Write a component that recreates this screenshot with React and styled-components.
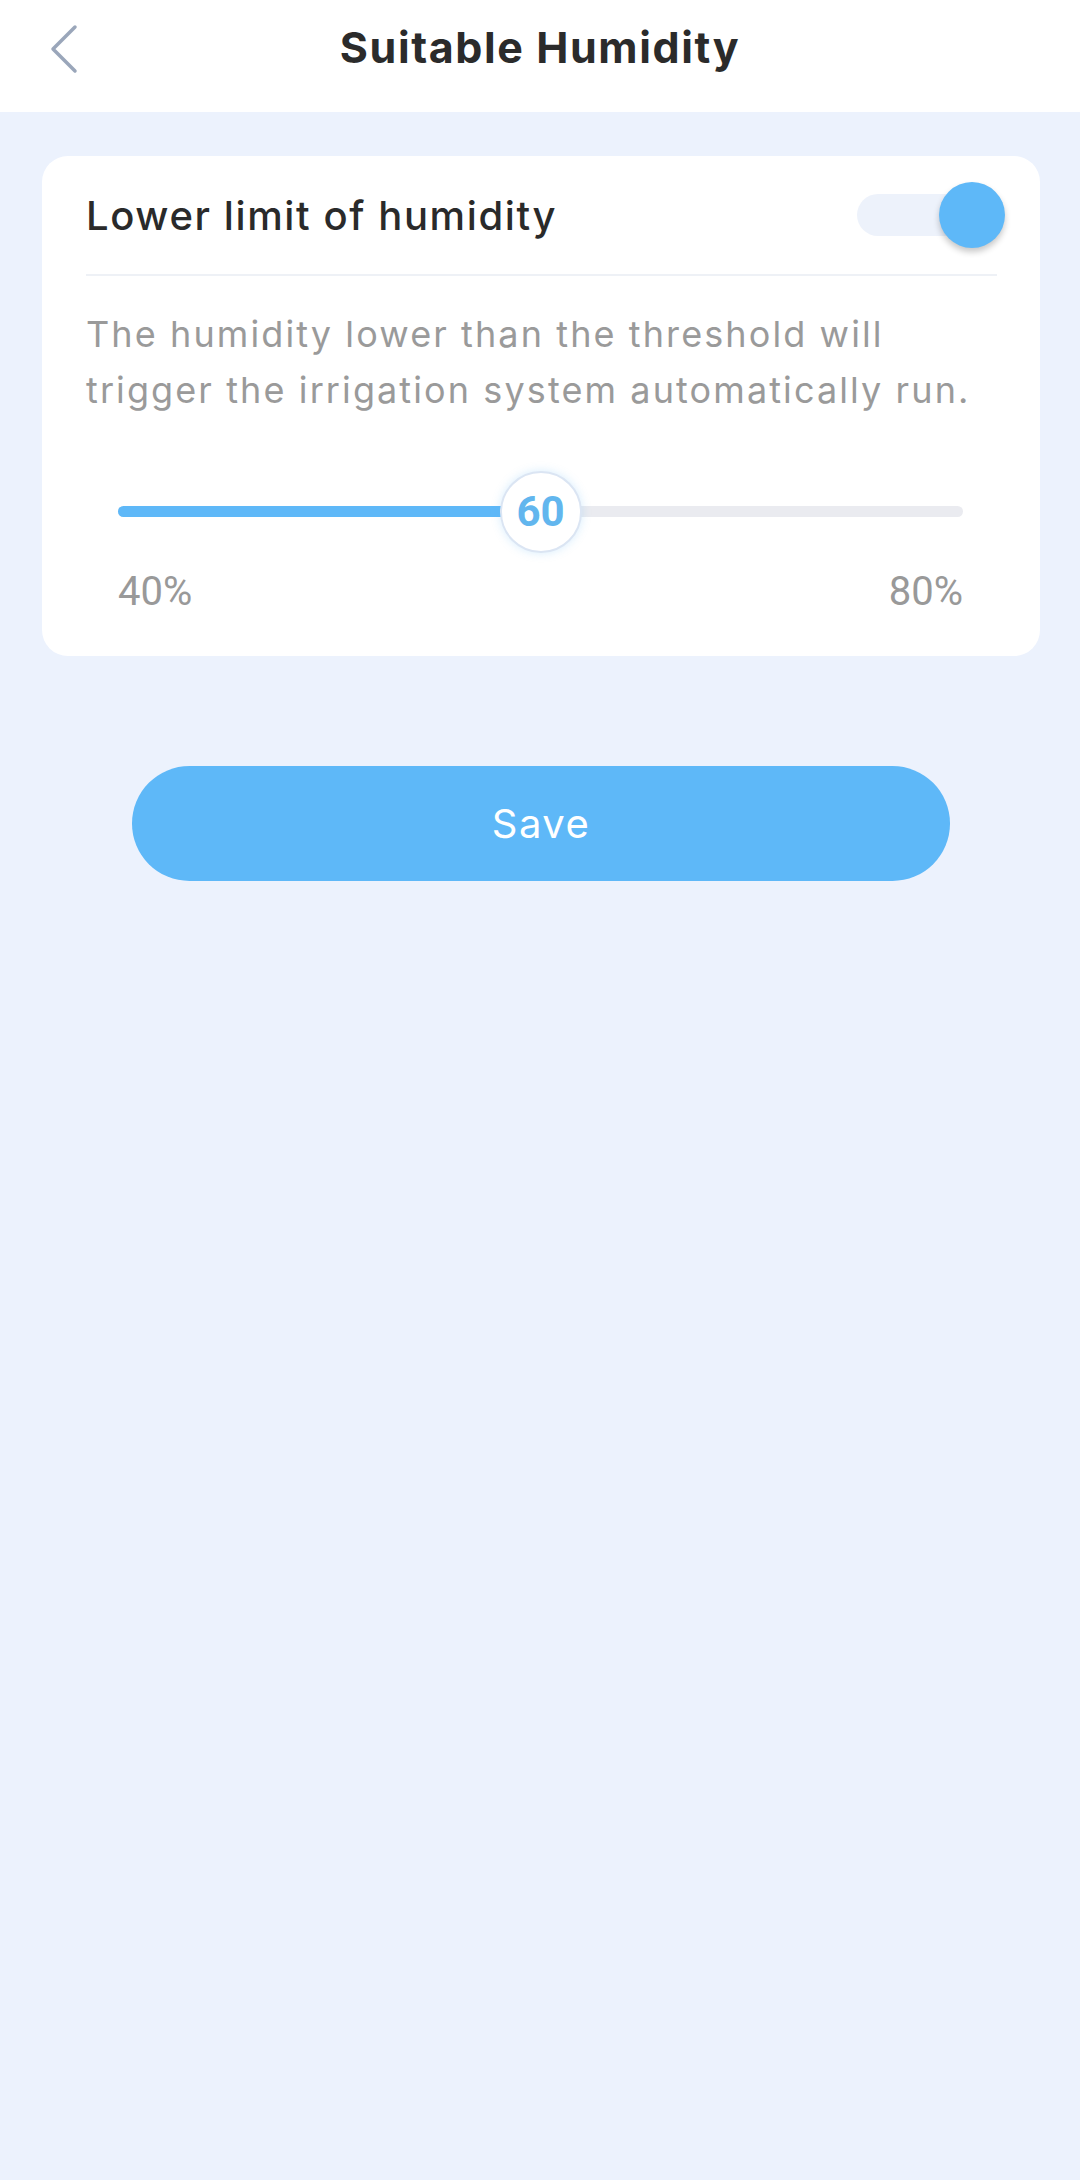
import React from 'react';
import styled, { createGlobalStyle } from 'styled-components';

const Global = createGlobalStyle`
    html, body {
        margin: 0;
        padding: 0;
        background: #ecf2fd;
    }
    body {
        font-family: Inter, "Noto Sans", sans-serif;
    }
`

const App = () => {
    const min = 40;
    const max = 80;
    const value = 60;
    const pct = ((value - min) / (max - min)) * 100;

    return (
        <Page>
            <Global />
            <Header>
                <Back aria-label="back">
                    <svg width="30" height="50" viewBox="0 0 30 50" fill="none">
                        <path d="M27 3 L5 25 L27 47" stroke="#9aa6ba" strokeWidth="3.5" strokeLinecap="round" strokeLinejoin="round"/>
                    </svg>
                </Back>
                <Title>Suitable Humidity</Title>
            </Header>
            <Main>
                <Card>
                    <CardHead>
                        <CardTitle>Lower limit of humidity</CardTitle>
                        <Toggle>
                            <Knob />
                        </Toggle>
                    </CardHead>
                    <Divider />
                    <Desc>
                        The humidity lower than the threshold will trigger the irrigation system automatically run.
                    </Desc>
                    <Slider>
                        <Track>
                            <Fill style={{ width: pct + '%' }} />
                            <Thumb style={{ left: pct + '%' }}>{value}</Thumb>
                        </Track>
                    </Slider>
                    <Labels>
                        <span>{min}%</span>
                        <span>{max}%</span>
                    </Labels>
                </Card>
                <SaveBtn>Save</SaveBtn>
            </Main>
        </Page>
    );
}

const Page = styled.div`
    min-height: 2180px;
    background: #ecf2fd;
`

const Header = styled.header`
    height: 112px;
    background: #ffffff;
    display: flex;
    align-items: center;
    justify-content: center;
    position: relative;
`

const Back = styled.div`
    position: absolute;
    left: 48px;
    top: 24px;
    display: flex;
`

const Title = styled.h1`
    margin: 0 0 18px 0;
    font-size: 43px;
    font-weight: 700;
    color: #2b2b2b;
    letter-spacing: 1.6px;
`

const Main = styled.main`
    padding: 44px 40px 0 42px;
    display: flex;
    flex-direction: column;
    align-items: center;
`

const Card = styled.section`
    width: 100%;
    background: #ffffff;
    border-radius: 26px;
    box-sizing: border-box;
    padding-bottom: 41px;
`

const CardHead = styled.div`
    height: 118px;
    display: flex;
    align-items: center;
    justify-content: space-between;
    padding: 0 43px 0 44px;
`

const CardTitle = styled.h2`
    margin: 0;
    font-size: 40px;
    font-weight: 500;
    color: #2a2a2a;
    letter-spacing: 1.6px;
`

const Toggle = styled.div`
    position: relative;
    width: 140px;
    height: 42px;
    border-radius: 21px;
    background: #edf2fb;
`

const Knob = styled.div`
    position: absolute;
    right: -8px;
    top: -12px;
    width: 66px;
    height: 66px;
    border-radius: 50%;
    background: #5eb8f8;
    box-shadow: 0 4px 6px rgba(0, 0, 0, 0.22);
`

const Divider = styled.div`
    height: 2px;
    background: #eef1f6;
    margin: 0 43px 0 44px;
`

const Desc = styled.p`
    margin: 30px 36px 0 44px;
    font-size: 36px;
    line-height: 56px;
    color: #9a9a9a;
    font-weight: 400;
    letter-spacing: 2.1px;
`

const Slider = styled.div`
    margin: 53px 77px 0 76px;
    height: 81px;
    display: flex;
    align-items: center;
`

const Track = styled.div`
    position: relative;
    width: 100%;
    height: 11px;
    border-radius: 6px;
    background: #eaebf0;
`

const Fill = styled.div`
    height: 100%;
    border-radius: 6px;
    background: #5eb8f8;
`

const Thumb = styled.div`
    position: absolute;
    top: 50%;
    width: 78px;
    height: 78px;
    transform: translate(-50%, -50%);
    border-radius: 50%;
    background: #ffffff;
    border: 2px solid #dbe5f3;
    box-shadow: 0 0 10px rgba(94, 184, 248, 0.25);
    display: flex;
    align-items: center;
    justify-content: center;
    font-family: Roboto, "Liberation Sans", sans-serif;
    font-size: 42px;
    font-weight: 700;
    color: #62b6ee;
`

const Labels = styled.div`
    margin: 17px 77px 0 76px;
    display: flex;
    justify-content: space-between;
    font-family: Roboto, "Liberation Sans", sans-serif;
    font-size: 40px;
    color: #999999;
    line-height: 46px;
`

const SaveBtn = styled.button`
    margin-top: 110px;
    width: 818px;
    height: 115px;
    border: none;
    border-radius: 58px;
    background: #5eb8f8;
    color: #ffffff;
    font-family: Inter, "Noto Sans", sans-serif;
    font-size: 40px;
    font-weight: 400;
    letter-spacing: 1.5px;
`

export default App;
